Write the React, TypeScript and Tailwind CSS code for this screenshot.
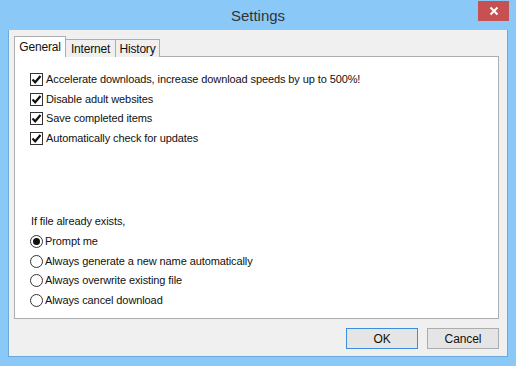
import React from "react";

const font = { fontFamily: '"Liberation Sans", Arial, sans-serif' };

const checks = [
  "Accelerate downloads, increase download speeds by up to 500%!",
  "Disable adult websites",
  "Save completed items",
  "Automatically check for updates",
];

const radios = [
  "Prompt me",
  "Always generate a new name automatically",
  "Always overwrite existing file",
  "Always cancel download",
];

function CheckBox() {
  return (
    <span className="w-[13px] h-[13px] border border-[#333] bg-white flex items-center justify-center shrink-0">
      <svg width="11" height="11" viewBox="0 0 11 11">
        <path d="M1.5 5.5 L4.2 8.3 L9.5 2" fill="none" stroke="#111" strokeWidth="2.2" />
      </svg>
    </span>
  );
}

function Radio({ on }: { on: boolean }) {
  return (
    <span className="w-[13px] h-[13px] rounded-full border border-[#333] bg-white flex items-center justify-center shrink-0">
      {on && <span className="w-[7px] h-[7px] rounded-full bg-[#111]" />}
    </span>
  );
}

export default function App() {
  return (
    <div className="w-[516px] h-[366px] bg-[#8ac8f8] flex flex-col text-[11px] tracking-[-0.1px] text-[#111]" style={font}>
      <div className="h-[30px] relative flex items-center justify-center">
        <span className="text-[15px] tracking-normal text-[#333] mt-[2px]">Settings</span>
        <div className="absolute right-[7px] top-[1px] w-[31px] h-[20px] bg-[#c75050] flex items-center justify-center">
          <svg width="10" height="10" viewBox="0 0 10 10">
            <path d="M1.5 1.5 L8.5 8.5 M8.5 1.5 L1.5 8.5" stroke="#fff" strokeWidth="2" />
          </svg>
        </div>
      </div>
      <div className="mx-[8px] h-[327px] bg-[#f0f0f0] border border-[#6ea9dc] border-t-0 pl-[5px] pr-[8px] pt-[7px] flex flex-col">
        <div className="flex items-end h-[20px] relative z-10 text-[12px] tracking-[-0.2px]">
          <div className="h-[21px] w-[52px] bg-white border border-[#adadad] border-b-0 flex items-center justify-center pb-[1px]">General</div>
          <div className="h-[18px] w-[50px] bg-[#f0f0f0] border border-[#adadad] border-l-0 border-b-0 flex items-center justify-center">Internet</div>
          <div className="h-[18px] w-[44px] bg-[#f0f0f0] border border-[#adadad] border-l-0 border-b-0 flex items-center justify-center">History</div>
        </div>
        <div className="h-[263px] bg-white border border-[#adadad] -mt-px pl-[15px] pt-[16px] flex flex-col">
          <div className="flex flex-col gap-[6.5px]">
            {checks.map((c) => (
              <div key={c} className="flex items-center gap-[3px] h-[13px]">
                <CheckBox />
                <span>{c}</span>
              </div>
            ))}
          </div>
          <div className="mt-[70.5px] pl-[1px] h-[13px] leading-[13px]">If file already exists,</div>
          <div className="flex flex-col gap-[6.5px] mt-[7px]">
            {radios.map((r, i) => (
              <div key={r} className="flex items-center gap-[2px] h-[13px]">
                <Radio on={i === 0} />
                <span>{r}</span>
              </div>
            ))}
          </div>
        </div>
        <div className="flex justify-end gap-[9px] mt-[9px]">
          <button className="w-[72px] h-[21px] bg-[#e5e5e5] border border-[#3c8fdc] text-[12px]" style={font}>OK</button>
          <button className="w-[72px] h-[21px] bg-[#e5e5e5] border border-[#adadad] text-[12px]" style={font}>Cancel</button>
        </div>
      </div>
    </div>
  );
}
